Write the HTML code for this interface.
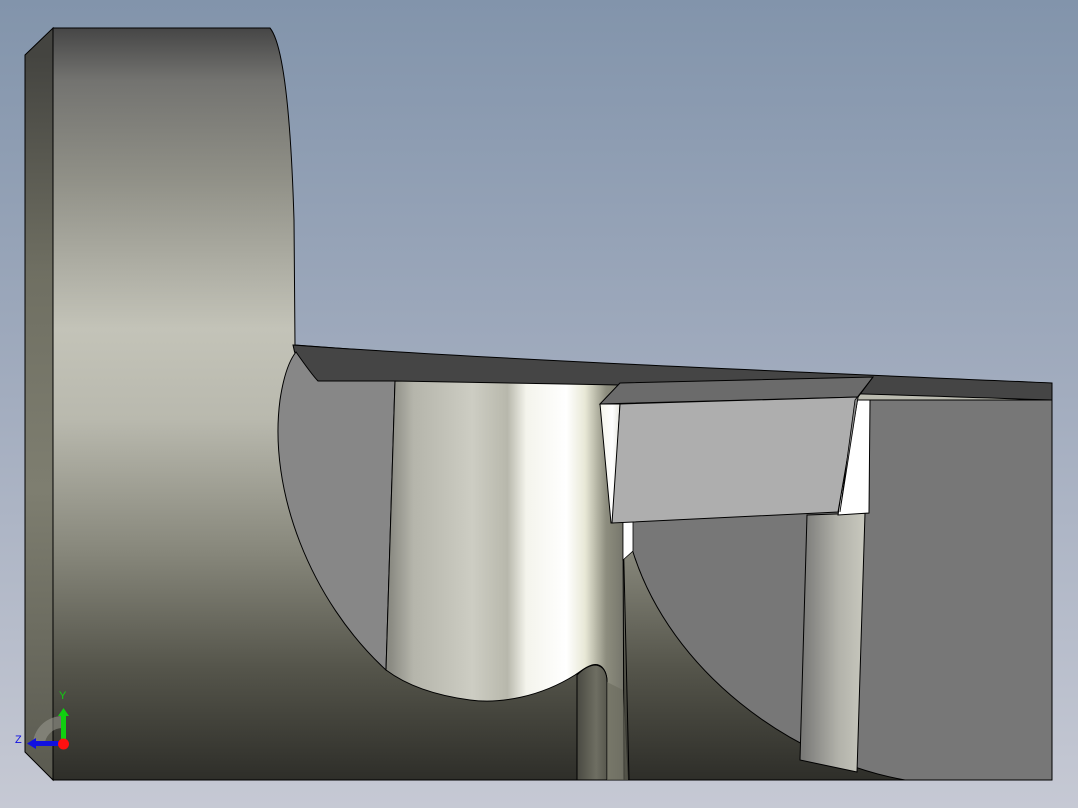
<!DOCTYPE html>
<html><head><meta charset="utf-8"><style>
html,body{margin:0;padding:0;width:1078px;height:808px;overflow:hidden}
svg{display:block}
</style></head><body>
<svg width="1078" height="808" viewBox="0 0 1078 808" xmlns="http://www.w3.org/2000/svg">
<defs>
<linearGradient id="bg" x1="0" y1="0" x2="0" y2="1">
<stop offset="0" stop-color="#8294ab"/><stop offset="0.5" stop-color="#a3adbf"/><stop offset="1" stop-color="#c6c9d4"/>
</linearGradient>
<linearGradient id="front" gradientUnits="userSpaceOnUse" x1="0" y1="28" x2="0" y2="780">
<stop offset="0" stop-color="#464646"/><stop offset="0.07" stop-color="#737370"/><stop offset="0.2" stop-color="#909087"/><stop offset="0.4" stop-color="#c3c3b8"/><stop offset="0.52" stop-color="#b9b9ae"/><stop offset="0.7" stop-color="#86867a"/><stop offset="0.85" stop-color="#55554b"/><stop offset="1" stop-color="#2e2e29"/>
</linearGradient>
<linearGradient id="side" gradientUnits="userSpaceOnUse" x1="0" y1="55" x2="0" y2="780">
<stop offset="0" stop-color="#444440"/><stop offset="0.3" stop-color="#6f6f62"/><stop offset="0.6" stop-color="#7e7e70"/><stop offset="1" stop-color="#5a5a50"/>
</linearGradient>
<linearGradient id="cyl" gradientUnits="userSpaceOnUse" x1="390" y1="0" x2="625" y2="0">
<stop offset="0" stop-color="#8a8a82"/><stop offset="0.1" stop-color="#b5b5ab"/><stop offset="0.35" stop-color="#cdcdc3"/><stop offset="0.5" stop-color="#b8b8ac"/><stop offset="0.58" stop-color="#f4f4ec"/><stop offset="0.75" stop-color="#ffffff"/><stop offset="0.83" stop-color="#e8e8d6"/><stop offset="0.92" stop-color="#8d8d7e"/><stop offset="1" stop-color="#74746a"/>
</linearGradient>
<linearGradient id="cyl2" gradientUnits="userSpaceOnUse" x1="803" y1="0" x2="862" y2="0">
<stop offset="0" stop-color="#7a7a78"/><stop offset="0.6" stop-color="#b2b2aa"/><stop offset="1" stop-color="#c6c6bc"/>
</linearGradient>
<linearGradient id="pin" gradientUnits="userSpaceOnUse" x1="577" y1="0" x2="625" y2="0">
<stop offset="0" stop-color="#4a4a42"/><stop offset="0.4" stop-color="#6e6e62"/><stop offset="0.6" stop-color="#5a5a50"/><stop offset="0.75" stop-color="#7e7e70"/><stop offset="1" stop-color="#6a6a5e"/>
</linearGradient>
<linearGradient id="wht" gradientUnits="userSpaceOnUse" x1="600" y1="0" x2="625" y2="0">
<stop offset="0" stop-color="#f4f4ea"/><stop offset="0.5" stop-color="#ffffff"/><stop offset="1" stop-color="#d0d0c4"/>
</linearGradient>
</defs>
<rect width="1078" height="808" fill="url(#bg)"/>
<!-- side face of plate -->
<path d="M25,55 L53,28 L53,780 L25,752 Z" fill="url(#side)" stroke="#000" stroke-width="1"/>
<!-- front face -->
<path d="M53,28 L270,28 C284,45 291,120 294,220 L295,345 L1052,400 L1052,780 L53,780 Z" fill="url(#front)" stroke="#000" stroke-width="1"/>
<!-- top dark band -->
<path d="M293,345 C500,360 800,372 1052,383 L1052,400 C800,392 560,383 318,381 C305,375 296,362 293,345 Z" fill="#454545" stroke="#000" stroke-width="1"/>
<!-- left cavity wall -->
<path d="M296,352 C310,372 315,378 318,381 L395,381 L386,670 C310,600 268,490 280,400 C283,380 288,362 296,352 Z" fill="#878787" stroke="#000" stroke-width="1"/>
<!-- right dark gray region -->
<path d="M625,400 L1052,400 L1052,780 L905,780 C790,760 670,670 633,552 L625,540 Z" fill="#777777" stroke="#000" stroke-width="1"/>
<!-- big cylinder -->
<path d="M395,381 L620,385 L623,525 L624,780 L607,780 L607,680 C606,668 600,663 592,665 C585,667 580,672 575,675 C540,697 500,704 470,700 C440,696 410,688 386,670 Z" fill="url(#cyl)" stroke="#000" stroke-width="1"/>
<!-- pin -->
<path d="M577,780 L577,675 C584,668 590,665 596,665 C603,666 607,672 607,682 L607,780 Z" fill="url(#pin)" stroke="#000" stroke-width="1"/>
<path d="M607,780 L607,682 L623,690 L628,780 Z" fill="#6a6a5e" opacity="0.6"/>
<line x1="623" y1="525" x2="629" y2="780" stroke="#000" stroke-width="1"/>
<!-- white gap below block -->
<path d="M623,520 L633,520 L633,551 L623,560 Z" fill="#ffffff" stroke="#000" stroke-width="0.8"/>
<!-- small cylinder -->
<path d="M807,515 L865,513 L857,772 L800,760 Z" fill="url(#cyl2)" stroke="#000" stroke-width="1"/>
<!-- white gap right -->
<path d="M855,400 L870,400 L869,513 L838,515 Z" fill="#ffffff" stroke="#000" stroke-width="1"/>
<!-- block white left face -->
<path d="M600,404 L620,404 L613,523 L611,523 Z" fill="url(#wht)" stroke="#000" stroke-width="1"/>
<!-- block top -->
<path d="M600,404 L620,383 L873,377 L858,397 Z" fill="#6b6b6b" stroke="#000" stroke-width="1"/>
<!-- block front -->
<path d="M620,404 L858,397 L838,512 L612,523 Z" fill="#aeaeae" stroke="#000" stroke-width="1"/>
<path d="M858,397 L873,377 L855,400 L840,512 Z" fill="#8a8a8a" stroke="#000" stroke-width="0.8"/>
<!-- axis triad -->
<path d="M33,742 A30,30 0 0 1 62,716 L62,728 A18,18 0 0 0 45,742 Z" fill="#9a9a92" opacity="0.55"/>
<rect x="34" y="741" width="28" height="5" fill="#1010e0"/>
<path d="M27,743.5 L36,738 L36,749 Z" fill="#1010e0"/>
<rect x="61" y="714" width="5" height="28" fill="#10d010"/>
<path d="M63.5,708 L58,716 L69,716 Z" fill="#10d010"/>
<circle cx="63.5" cy="744" r="5.5" fill="#ff1010"/>
<text x="59" y="699" font-family="Liberation Sans, sans-serif" font-size="11" fill="#10d010">Y</text>
<text x="15" y="743" font-family="Liberation Sans, sans-serif" font-size="11" fill="#1010e0">Z</text>
</svg>
</body></html>
